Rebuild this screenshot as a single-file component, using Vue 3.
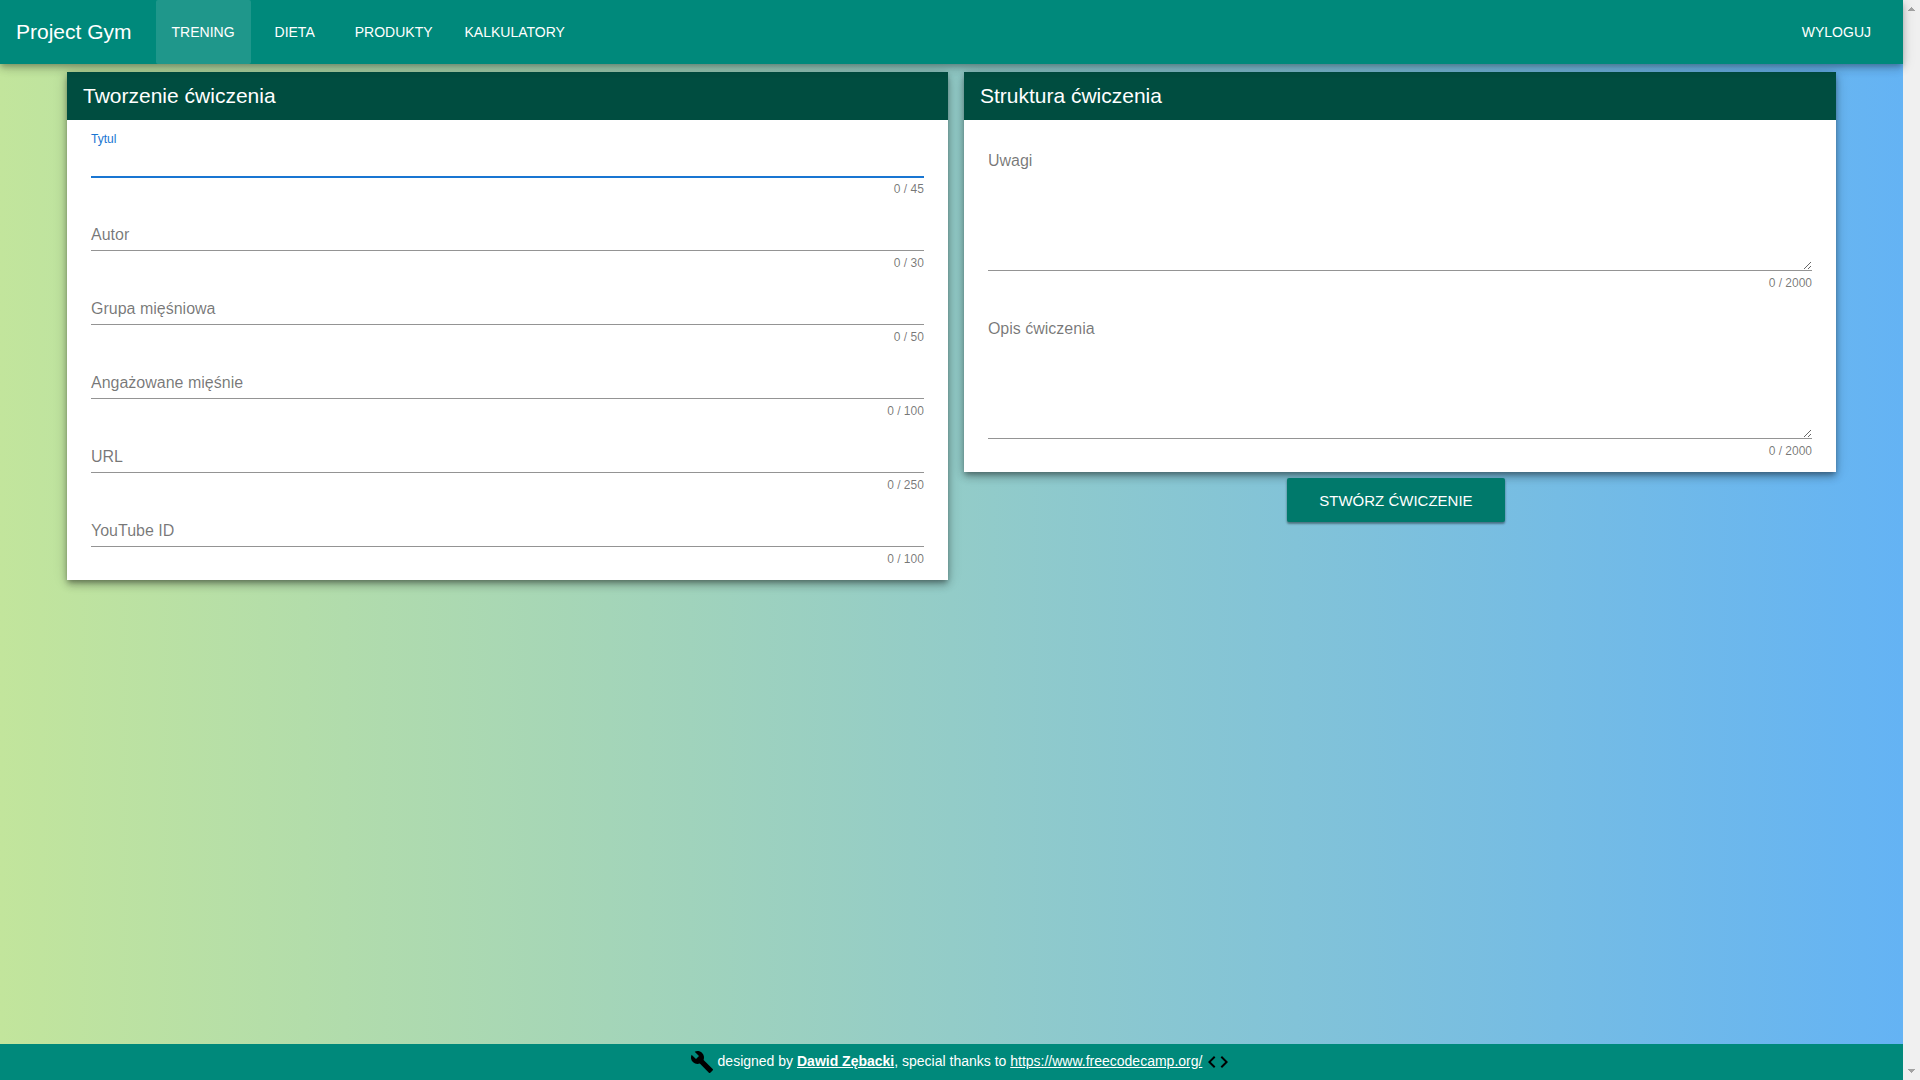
<script setup>
import { reactive, ref } from 'vue'

const navItems = ['Trening', 'Dieta', 'Produkty', 'Kalkulatory']
const activeItem = 'Trening'

const fields = reactive([
  { id: 'title', label: 'Tytul', max: 45, value: '' },
  { id: 'author', label: 'Autor', max: 30, value: '' },
  { id: 'group', label: 'Grupa mięśniowa', max: 50, value: '' },
  { id: 'muscles', label: 'Angażowane mięśnie', max: 100, value: '' },
  { id: 'url', label: 'URL', max: 250, value: '' },
  { id: 'youtube', label: 'YouTube ID', max: 100, value: '' }
])

const areas = reactive([
  { id: 'notes', label: 'Uwagi', max: 2000, value: '' },
  { id: 'description', label: 'Opis ćwiczenia', max: 2000, value: '' }
])

const focused = ref('title')
</script>

<template>
  <div class="window">
    <div class="page">
      <header class="toolbar">
        <a href="#" class="brand">Project Gym</a>
        <nav class="nav">
          <a
            v-for="item in navItems"
            :key="item"
            href="#"
            class="nav-link"
            :class="{ active: item === activeItem }"
          >{{ item }}</a>
        </nav>
        <a href="#" class="nav-link logout">Wyloguj</a>
      </header>

      <main class="content">
        <section class="column">
          <div class="card">
            <h2 class="card-title">Tworzenie ćwiczenia</h2>
            <div class="card-body">
              <div
                v-for="field in fields"
                :key="field.id"
                class="field"
                :class="{ focused: focused === field.id, filled: field.value }"
              >
                <label :for="field.id">{{ field.label }}</label>
                <input
                  :id="field.id"
                  v-model="field.value"
                  type="text"
                  :maxlength="field.max"
                  @focus="focused = field.id"
                />
                <span class="counter">{{ field.value.length }} / {{ field.max }}</span>
              </div>
            </div>
          </div>
        </section>

        <section class="column">
          <div class="card second">
            <h2 class="card-title">Struktura ćwiczenia</h2>
            <div class="card-body">
              <div
                v-for="area in areas"
                :key="area.id"
                class="field area"
                :class="{ focused: focused === area.id, filled: area.value }"
              >
                <label :for="area.id">{{ area.label }}</label>
                <textarea
                  :id="area.id"
                  v-model="area.value"
                  :maxlength="area.max"
                  @focus="focused = area.id"
                ></textarea>
                <span class="counter">{{ area.value.length }} / {{ area.max }}</span>
              </div>
            </div>
          </div>
          <button type="button" class="submit">Stwórz ćwiczenie</button>
        </section>
      </main>

      <footer class="footer">
        <svg class="icon" viewBox="0 0 24 24" aria-hidden="true">
          <path d="M22.7 19l-9.1-9.1c.9-2.3.4-5-1.5-6.9-2-2-5-2.4-7.4-1.3L9 6 6 9 1.6 4.7C.4 7.1.9 10.1 2.9 12.1c1.9 1.9 4.6 2.4 6.9 1.5l9.1 9.1c.4.4 1 .4 1.4 0l2.3-2.3c.5-.4.5-1.1.1-1.4z" />
        </svg>
        <p>designed by <a href="#" class="author">Dawid Zębacki</a>, special thanks to <a href="#">https://www.freecodecamp.org/</a></p>
        <svg class="icon" viewBox="0 0 24 24" aria-hidden="true">
          <path d="M9.4 16.6L4.8 12l4.6-4.6L8 6l-6 6 6 6 1.4-1.4zm5.2 0l4.6-4.6-4.6-4.6L16 6l6 6-6 6-1.4-1.4z" />
        </svg>
      </footer>
    </div>

    <div class="scrollbar" aria-hidden="true">
      <svg viewBox="0 0 17 17"><path d="M5 11h7v-1h-1V9h-1V8H9V7H8v1H7v1H6v1H5z" /></svg>
      <svg viewBox="0 0 17 17"><path d="M5 6h7v1h-1v1h-1v1H9v1H8V9H7V8H6V7H5z" /></svg>
    </div>
  </div>
</template>

<style>
body {
  margin: 0;
}
</style>

<style scoped>
.window {
  display: flex;
  min-height: 100vh;
  font-family: "Liberation Sans", Arial, sans-serif;
}

.page {
  flex: 1;
  min-width: 0;
  display: flex;
  flex-direction: column;
  background: linear-gradient(to right, #c2e59c, #64b3f4);
}

.toolbar {
  position: relative;
  z-index: 1;
  display: flex;
  height: 64px;
  padding: 0 16px;
  background: #00897b;
  box-shadow: 0 3px 5px -1px rgba(0, 0, 0, 0.2), 0 5px 8px 0 rgba(0, 0, 0, 0.14), 0 1px 14px 0 rgba(0, 0, 0, 0.12);
}

.brand {
  margin-right: 24px;
  color: #fff;
  font-size: 21px;
  line-height: 64px;
  text-decoration: none;
}

.nav {
  display: flex;
}

.nav-link {
  padding: 0 16px;
  border-radius: 2px;
  color: #fff;
  font-size: 14px;
  line-height: 64px;
  text-decoration: none;
  text-transform: uppercase;
}

.nav-link:nth-child(2) {
  margin: 0 8px;
}

.nav-link.active {
  background: rgba(255, 255, 255, 0.12);
}

.nav-link.logout {
  margin-left: auto;
}

.content {
  flex: 1;
  display: grid;
  grid-template-columns: 101fr 100fr;
  align-items: start;
  padding: 8px 67px;
}

.column {
  min-width: 0;
  display: flex;
  flex-direction: column;
}

.card {
  margin-right: 8px;
  background: #fff;
  box-shadow: 0 3px 5px -1px rgba(0, 0, 0, 0.3), 0 5px 8px 0 rgba(0, 0, 0, 0.2), 0 1px 14px 0 rgba(0, 0, 0, 0.16);
}

.card.second {
  margin: 0 0 0 8px;
}

.card-title {
  margin: 0;
  padding: 0 16px;
  background: #004d40;
  color: #fff;
  font-size: 21px;
  font-weight: 400;
  line-height: 48px;
}

.card-body {
  padding: 8px 24px;
}

.field {
  position: relative;
  display: flex;
  flex-direction: column;
  height: 74px;
}

.field.area {
  height: 168px;
}

.field label {
  position: absolute;
  top: 23px;
  left: 0;
  color: rgba(0, 0, 0, 0.54);
  font-size: 16px;
  line-height: 20px;
}

.field.focused label,
.field.filled label {
  top: 1px;
  font-size: 12px;
}

.field.focused label {
  color: #1976d2;
}

.field input,
.field textarea {
  box-sizing: border-box;
  width: 100%;
  height: 31px;
  margin: 18px 0 0;
  padding: 2px 0 0;
  border: 0;
  border-bottom: 1px solid #949494;
  border-radius: 0;
  outline: 0;
  background: transparent;
  font: inherit;
  font-size: 16px;
}

.field textarea {
  height: 125px;
  resize: vertical;
}

.field.focused input,
.field.focused textarea {
  height: 32px;
  margin-bottom: -1px;
  border-bottom: 2px solid #1976d2;
}

.field.focused textarea {
  height: 126px;
}

.counter {
  align-self: flex-end;
  margin-top: 4px;
  color: rgba(0, 0, 0, 0.54);
  font-size: 12px;
  line-height: 16px;
}

.submit {
  align-self: center;
  height: 44px;
  margin-top: 6px;
  padding: 0 32px;
  border: 0;
  border-radius: 2px;
  background: #00796b;
  box-shadow: 0 2px 2px 0 rgba(0, 0, 0, 0.3), 0 1px 3px 0 rgba(0, 0, 0, 0.2);
  color: #fff;
  font: inherit;
  font-size: 15px;
  text-transform: uppercase;
}

/* The left padding balances the scrollbar, so the line is centred in the window. */
.footer {
  display: flex;
  align-items: center;
  justify-content: center;
  gap: 4px;
  height: 36px;
  padding-left: 17px;
  background: #00897b;
  color: #fff;
  font-size: 14px;
}

.footer p {
  margin: 0;
  padding-bottom: 2px;
}

.footer a {
  color: #fff;
}

.footer .author {
  font-weight: 700;
}

.icon {
  width: 24px;
  height: 24px;
  fill: #000;
}

.scrollbar {
  display: flex;
  flex-direction: column;
  justify-content: space-between;
  width: 17px;
  background: #f0f0f0;
}

.scrollbar svg {
  width: 17px;
  height: 17px;
  fill: #a3a3a3;
  shape-rendering: crispEdges;
}
</style>
